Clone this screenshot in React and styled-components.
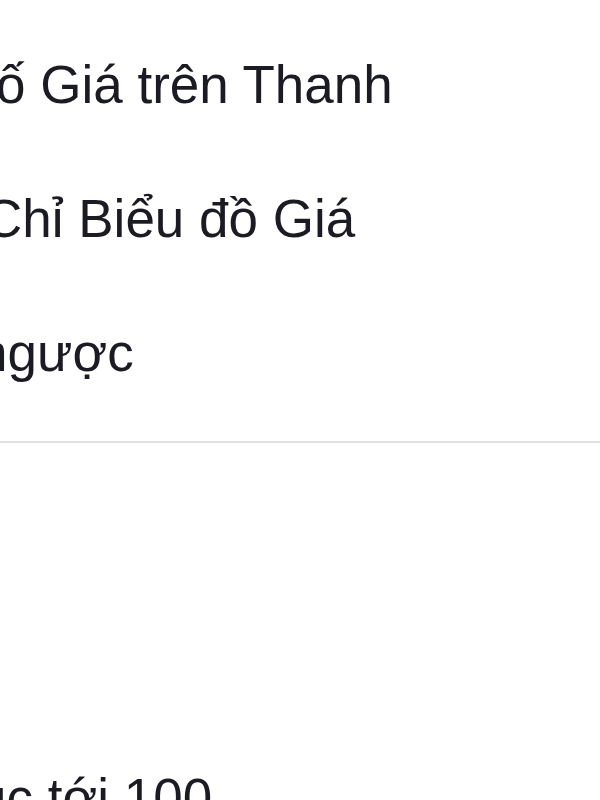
import React from "react";
import styled, { createGlobalStyle } from "styled-components";

const Global = createGlobalStyle`
  html, body { margin: 0; padding: 0; background: #ffffff; }
  body { font-family: "Liberation Sans", Arial, Helvetica, sans-serif; }
`;

const Page = styled.div`
  width: 600px;
  height: 800px;
  overflow: hidden;
  background: #ffffff;
  color: #1b1b23;
`;

const Section = styled.section`
  display: flex;
  flex-direction: column;
  padding-top: ${(p) => p.$top}px;
  padding-bottom: ${(p) => p.$bottom || 0}px;
  border-bottom: ${(p) => (p.$divider ? "2px solid #e1e1e4" : "none")};
`;

const Row = styled.div`
  display: flex;
  align-items: center;
  padding: 37px 0;
`;

const Label = styled.span`
  font-size: 53px;
  line-height: 60px;
  white-space: nowrap;
  margin-left: ${(p) => p.$shift}px;
`;

export default function App() {
  return (
    <Page>
      <Global />
      <Section $top={18} $bottom={21} $divider>
        <Row>
          <Label $shift={-4}>ố Giá trên Thanh</Label>
        </Row>
        <Row>
          <Label $shift={-16}>Chỉ Biểu đồ Giá</Label>
        </Row>
        <Row>
          <Label $shift={-22}>ngược</Label>
        </Row>
      </Section>
      <Section $top={288}>
        <Row>
          <Label $shift={-23}>uc tới 100</Label>
        </Row>
      </Section>
    </Page>
  );
}
